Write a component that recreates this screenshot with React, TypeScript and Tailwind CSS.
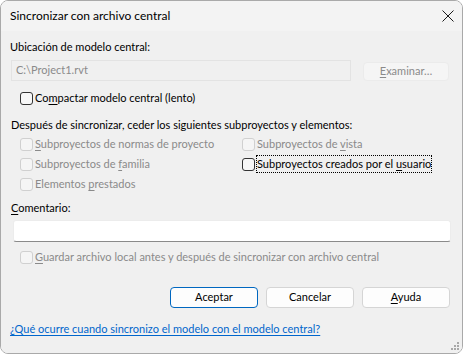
import React from "react";

const M = ({ children }: { children: React.ReactNode }) => (
  <span className="underline underline-offset-[2px] decoration-1">{children}</span>
);

const Box = ({ disabled }: { disabled?: boolean }) => (
  <span
    className={
      "inline-block w-[13px] h-[13px] rounded-[3px] border shrink-0 " +
      (disabled ? "border-[#d0d0d0] bg-[#f5f5f5]" : "border-[#333333] bg-[#f7f7f7]")
    }
  />
);

const Check = ({
  disabled,
  children,
  focus,
}: {
  disabled?: boolean;
  children: React.ReactNode;
  focus?: boolean;
}) => (
  <div className="flex items-center h-[16px]">
    <Box disabled={disabled} />
    <span
      className={
        "ml-[2px] leading-[16px] whitespace-nowrap " +
        (disabled ? "text-[#8a8a8a]" : "text-black") +
        (focus ? " outline outline-1 outline-dotted outline-black" : "")
      }
    >
      {children}
    </span>
  </div>
);

export default function App() {
  return (
    <div
      className="w-[463px] h-[354px] bg-white text-[11px] text-black whitespace-nowrap"
      style={{ fontFamily: 'Lato, "Noto Sans", sans-serif' }}
    >
      <div className="w-full h-full rounded-[8px] border border-[#a9a9a9] overflow-hidden flex flex-col">
        <div className="h-[30px] bg-[#f3f3f3] flex items-center justify-between pl-[9px] pr-[7px] shrink-0">
          <span className="leading-[16px] text-[12px]">Sincronizar con archivo central</span>
          <svg width="12" height="12" viewBox="0 0 12 12" className="mr-[1px]">
            <path d="M0.5 0.5 L11.5 11.5 M11.5 0.5 L0.5 11.5" stroke="#1a1a1a" strokeWidth="1" />
          </svg>
        </div>
        <div className="flex-1 bg-[#f0f0f0] relative pl-[9px] pr-[11px] pt-[8px] flex flex-col">
          <div className="leading-[16px]">Ubicación de modelo central:</div>
          <div className="flex mt-[5px] items-start">
            <div className="ml-[1px] w-[340px] h-[21px] border border-[#e3e3e3] bg-[#f0f0f0] text-[#8a8a8a] pl-[4px] flex items-center">
              C:\Project1.rvt
            </div>
            <div className="ml-[12px] mt-[2px] w-[86px] h-[19px] rounded-[4px] border border-[#ebebeb] bg-[#f5f5f5] text-[#8a8a8a] flex items-center justify-center">
              <span>
                <M>E</M>xaminar…
              </span>
            </div>
          </div>
          <div className="mt-[9px] ml-[10px]">
            <Check>
              Co<M>m</M>pactar modelo central (lento)
            </Check>
          </div>
          <div className="mt-[11px] ml-[1px] leading-[16px]">
            Después de sincronizar, ceder los siguientes subproyectos y elementos:
          </div>
          <div className="mt-[3px] ml-[10px] grid grid-cols-[222px_1fr] gap-y-[4px]">
            <Check disabled>
              <M>S</M>ubproyectos de normas de proyecto
            </Check>
            <Check disabled>
              Subproyectos de <M>v</M>ista
            </Check>
            <Check disabled>
              Subproyectos de <M>f</M>amilia
            </Check>
            <Check focus>
              Subproyectos creados por el <M>u</M>suario
            </Check>
            <Check disabled>
              Elementos <M>p</M>restados
            </Check>
          </div>
          <div className="mt-[8px] ml-[1px] leading-[16px]">
            <M>C</M>omentario:
          </div>
          <div className="mt-[4px] ml-[3px] w-[438px] h-[22px] bg-white border border-[#ececec] border-b-[#8a8a8a] rounded-[3px]" />
          <div className="mt-[7px] ml-[10px]">
            <Check disabled>
              <M>G</M>uardar archivo local antes y después de sincronizar con archivo central
            </Check>
          </div>
          <div className="mt-[22px] flex justify-end gap-[8px] mr-[1px]">
            <div className="w-[88px] h-[21px] rounded-[4px] border border-[#0067c0] bg-[#fdfdfd] flex items-center justify-center">
              Aceptar
            </div>
            <div className="w-[88px] h-[21px] rounded-[4px] border border-[#d5d5d5] bg-[#fdfdfd] flex items-center justify-center">
              Cancelar
            </div>
            <div className="w-[88px] h-[21px] rounded-[4px] border border-[#d5d5d5] bg-[#fdfdfd] flex items-center justify-center">
              <span>
                <M>A</M>yuda
              </span>
            </div>
          </div>
          <div className="mt-[13px] leading-[16px] text-[#0066cc] underline underline-offset-[2px] self-start">
            ¿Qué ocurre cuando sincronizo el modelo con el modelo central?
          </div>
          <svg width="9" height="9" viewBox="0 0 9 9" className="absolute right-[2px] bottom-[2px]">
            <g fill="#a8a8a8">
              <rect x="6" y="0" width="2" height="2" />
              <rect x="3" y="3" width="2" height="2" />
              <rect x="6" y="3" width="2" height="2" />
              <rect x="0" y="6" width="2" height="2" />
              <rect x="3" y="6" width="2" height="2" />
              <rect x="6" y="6" width="2" height="2" />
            </g>
          </svg>
        </div>
      </div>
    </div>
  );
}
